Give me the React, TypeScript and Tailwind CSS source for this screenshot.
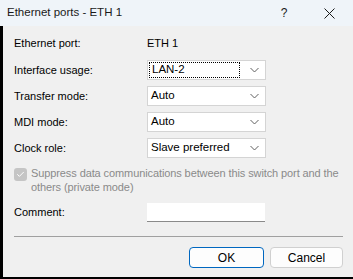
import { Check } from 'lucide-react';

const font = { fontFamily: '"Liberation Sans", Arial, sans-serif' };

function Chevron() {
  return (
    <svg width="9" height="6" viewBox="0 0 9 6" className="shrink-0">
      <path d="M0.5 1 L4.5 5 L8.5 1" fill="none" stroke="#606060" strokeWidth="1" />
    </svg>
  );
}

function Select({ value, focused }: { value: string; focused?: boolean }) {
  return (
    <div className="flex h-[20px] w-[119px] items-center border border-[#d4d4d4] bg-white pl-[1px] pr-[6px]">
      <div
        className={`flex h-[16px] flex-1 items-center pl-[2px] ${
          focused ? 'mr-[10px] border border-dotted border-black' : 'mr-[11px]'
        }`}
      >
        <span className="text-[11.5px] leading-none text-black">{value}</span>
      </div>
      <Chevron />
    </div>
  );
}

const rows = [
  { label: 'Interface usage:', value: 'LAN-2', focused: true },
  { label: 'Transfer mode:', value: 'Auto' },
  { label: 'MDI mode:', value: 'Auto' },
  { label: 'Clock role:', value: 'Slave preferred' },
];

export default function App() {
  return (
    <div className="flex h-[279px] w-[353px] flex-col overflow-hidden bg-black" style={font}>
      <div className="flex h-[26px] shrink-0 items-center bg-[#eff4f9] pl-[7px]">
        <span className="flex-1 text-[11.5px] text-[#1a1a1a]">Ethernet ports - ETH 1</span>
        <span className="w-[46px] text-center text-[12px] text-[#1a1a1a]">?</span>
        <div className="flex w-[46px] justify-center pr-[2px]">
          <svg width="11" height="11" viewBox="0 0 11 11">
            <path d="M0.5 0.5 L10.5 10.5 M10.5 0.5 L0.5 10.5" stroke="#1a1a1a" strokeWidth="1" />
          </svg>
        </div>
      </div>
      <div className="ml-[3px] mb-[2px] flex flex-1 flex-col bg-[#f0f0f0] pl-[11px] pr-[10px] text-[11px] text-black">
        <div className="mt-[10px] flex h-[14px] items-center">
          <span className="w-[133px]">Ethernet port:</span>
          <span>ETH 1</span>
        </div>
        <div className="mt-[10px] flex flex-col gap-[6px]">
          {rows.map((r) => (
            <div key={r.label} className="flex items-center">
              <span className="w-[133px]">{r.label}</span>
              <Select value={r.value} focused={r.focused} />
            </div>
          ))}
        </div>
        <div className="mt-[8px] flex items-start gap-[4px]">
          <div className="mt-[2px] flex h-[13px] w-[13px] shrink-0 items-center justify-center rounded-[3px] bg-[#c5c5c5]">
            <Check size={9} strokeWidth={2.5} color="#ffffff" />
          </div>
          <span className="text-[11px] leading-[14px] tracking-[-0.1px] text-[#8a8a8a]">
            Suppress data communications between this switch port and the others (private mode)
          </span>
        </div>
        <div className="mt-[9px] flex items-center">
          <span className="w-[133px]">Comment:</span>
          <div className="h-[19px] w-[118px] border-b border-[#8a8a8a] bg-white" />
        </div>
        <div className="mt-[14px] h-px shrink-0 bg-[#a0a0a0]" />
        <div className="mt-[10px] flex justify-end gap-[6px]">
          <button className="h-[21px] w-[75px] rounded-[4px] border border-[#0067c0] bg-[#fdfdfd] text-[12px] text-black">
            OK
          </button>
          <button className="h-[21px] w-[73px] rounded-[4px] border border-[#d0d0d0] bg-[#fdfdfd] text-[12px] text-black">
            Cancel
          </button>
        </div>
      </div>
    </div>
  );
}
